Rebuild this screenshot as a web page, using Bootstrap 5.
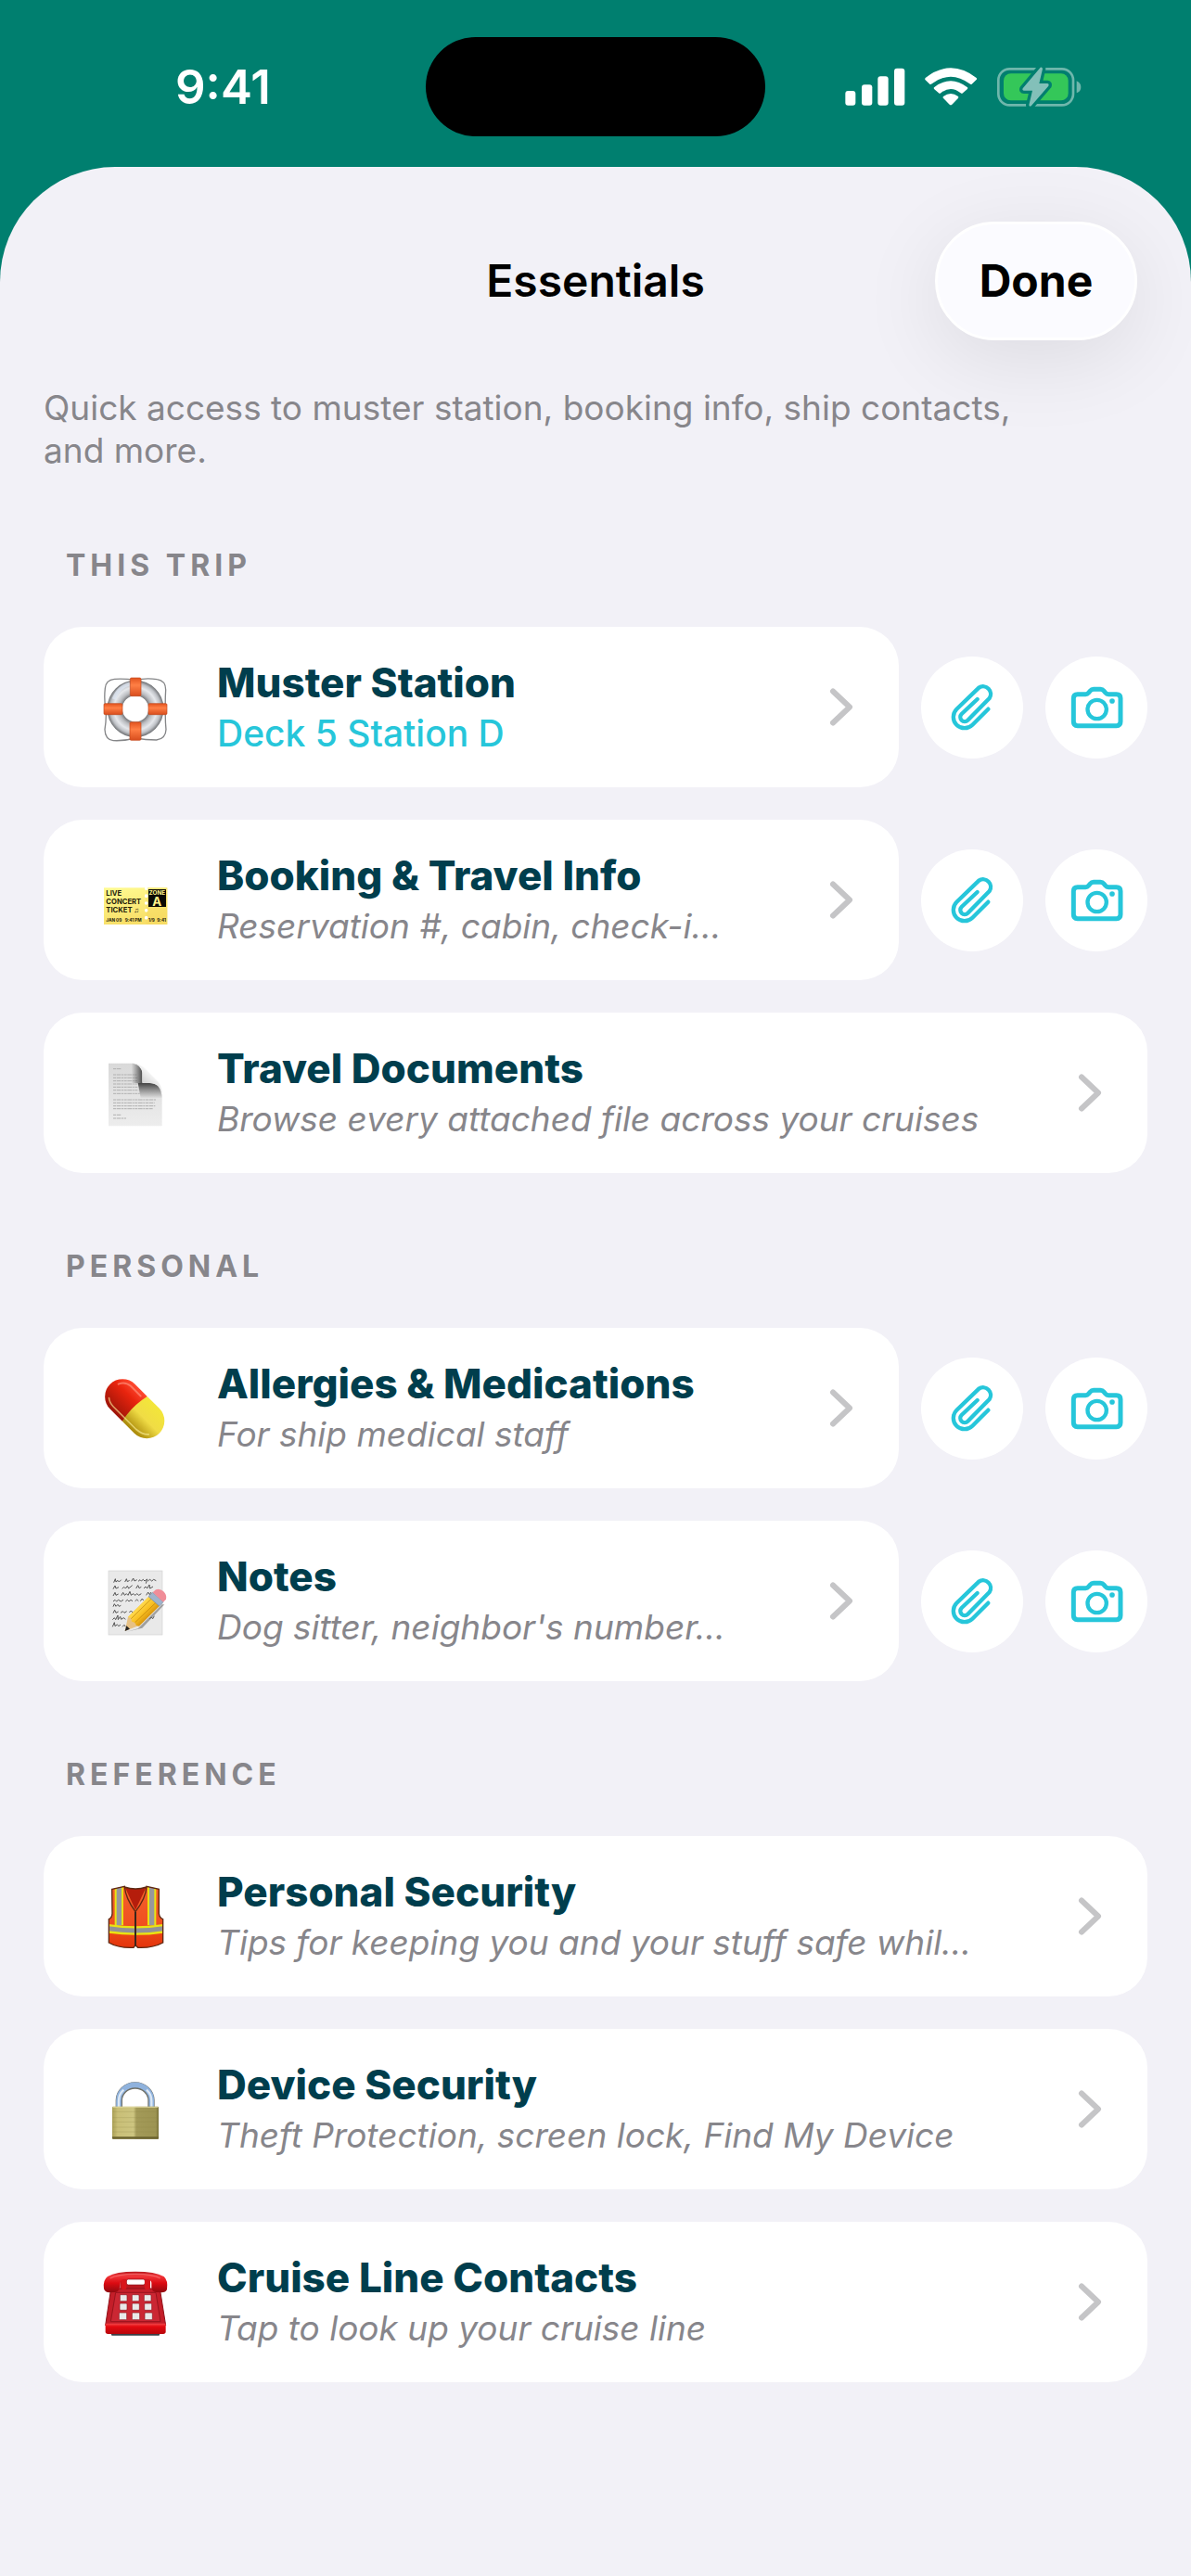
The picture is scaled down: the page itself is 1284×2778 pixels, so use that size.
<!DOCTYPE html>
<html lang="en">
<head>
<meta charset="utf-8">
<meta name="viewport" content="width=device-width, initial-scale=1">
<title>Essentials</title>
<link href="https://cdn.jsdelivr.net/npm/bootstrap@5.3.0/dist/css/bootstrap.min.css" rel="stylesheet">
<style>
  body { background: #007f6f; font-family: Inter, "Liberation Sans", sans-serif; color: #000; }
  .status-bar { height: 180px; padding: 40px 0 33px; color: #fff; }
  .status-side { flex: 1 1 0; height: 110px; }
  .clock { margin-left: 189px; font-size: 51px; line-height: 60px; font-weight: 600; }
  .status-icons { margin-right: 117px; }
  .island { width: 366px; height: 107px; border-radius: 54px; background: #000; }
  .sheet { min-height: calc(100vh - 180px); background: #f2f1f7; border-radius: 124px 124px 0 0; padding: 59px 47px 180px; overflow: hidden; }
  .sheet-head { display: grid; grid-template-columns: 1fr auto 1fr; margin-right: 11px; padding-left: 11px; }
  .sheet-title { font-size: 48px; line-height: 60px; font-weight: 600; }
  .done-btn { height: 128px; width: 218px; border-radius: 64px; background: #fbfbff; border: 3px solid #fff; font-size: 48px; line-height: 60px; font-weight: 700; padding: 0; box-shadow: 0 20px 90px rgba(0,0,0,.09); }
  .intro { font-size: 37px; line-height: 46px; color: #87868b; margin: 50px 100px 0 0; }
  .group-title { font-size: 32px; line-height: 38px; font-weight: 700; letter-spacing: 5px; color: #87868b; margin: 82px 24px 47px; }
  .rows { gap: 35px; }
  .row-line { gap: 24px; }
  .entry { min-height: 173px; border-radius: 42px; border: 0; background: #fff; padding: 0 46px 0 43px; min-width: 0; }
  .emoji { width: 110px; height: 110px; margin-right: 34px; }
  .entry-name { font-size: 44px; line-height: 56px; font-weight: 800; color: #003e4d; }
  .entry-note { font-size: 37px; line-height: 54px; font-style: italic; color: #87868b; }
  .entry-value { font-size: 39px; line-height: 54px; font-weight: 500; color: #26c6da; }
  .chev { width: 31px; height: 45px; }
  .round-btn { width: 110px; height: 110px; border: 0; background: #fff; }
  .round-btn svg { width: 67px; height: 67px; }
</style>
<script src="https://cdn.jsdelivr.net/npm/bootstrap@5.3.0/dist/js/bootstrap.bundle.min.js"></script>
</head>
<body>
<svg class="d-none" aria-hidden="true">
  <symbol id="chevron" viewBox="0 0 31 45"><path d="M6 5.500 24 22.500 6 39.500" fill="none" stroke="#c5c5c7" stroke-width="6" stroke-linecap="round" stroke-linejoin="round"/></symbol>
  <symbol id="clip" viewBox="402 208 201 201"><path d="M553 315 502 366A36 36 0 0 1 451 315L523 246A24.500 24.500 0 0 1 557 280L487 351A14 14 0 0 1 467 331L518 283" fill="none" stroke="#26c6da" stroke-width="13" stroke-linecap="round" stroke-linejoin="round"/></symbol>
  <symbol id="camera" viewBox="805 208 201 201"><path d="M843 267h26q6 0 10-5l5-6q4-5 11-5h22q7 0 11 5l5 6q4 5 10 5h26q13 0 13 13v76q0 13-13 13h-126q-13 0-13-13v-76q0-13 13-13z" fill="none" stroke="#26c6da" stroke-width="15"/><circle cx="906" cy="316" r="30.500" fill="none" stroke="#26c6da" stroke-width="13"/><circle cx="955" cy="289" r="8.500" fill="#26c6da"/></symbol>
</svg>

<header class="status-bar d-flex align-items-center justify-content-between">
  <div class="status-side d-flex align-items-center"><span class="clock">9:41</span></div>
  <div class="island flex-shrink-0"></div>
  <div class="status-side d-flex align-items-center justify-content-end">
    <svg class="status-icons" width="256" height="44" viewBox="92 65 768 132" aria-label="Signal, Wi-Fi, battery charging">
      <g fill="#fff">
        <rect x="93" y="143" width="33" height="47" rx="9"/><rect x="146" y="123" width="34" height="67" rx="9"/><rect x="198" y="96" width="34" height="94" rx="9"/><rect x="251" y="70" width="34" height="120" rx="9"/>
        <path d="M352 101Q434 37 517 101Q520 105 516 108L502 121Q499 123 495 120Q434 74 373 120Q369 123 366 121L352 108Q349 105 352 101Z"/>
        <path d="M381 131Q434 90 487 131Q491 134 487 138L473 150Q470 153 466 150Q434 124 402 150Q398 153 395 150L381 138Q377 134 381 131Z"/>
        <path d="M410 161Q434 143 458 161Q461 164 457 168L438 187Q434 191 430 187L411 168Q407 164 410 161Z"/>
      </g>
      <rect x="588" y="72" width="242" height="117" rx="36" fill="none" stroke="#6fb7ac" stroke-width="8"/>
      <rect x="605" y="87" width="209" height="87" rx="23" fill="#34c759"/>
      <path d="M841 111Q855 117 855 131T841 150Z" fill="#6fb7ac"/>
      <path d="M724 67 667 135Q664 142 671 142H698L687 189Q688 196 694 192L750 127Q753 120 746 119H720L731 72Q730 65 724 67Z" fill="#83c0b9" stroke="#007f6f" stroke-width="20" paint-order="stroke" stroke-linejoin="round"/>
    </svg>
  </div>
</header>

<main class="sheet">
  <div class="sheet-head align-items-center">
    <span></span>
    <h1 class="sheet-title m-0">Essentials</h1>
    <div class="text-end"><button type="button" class="done-btn">Done</button></div>
  </div>
  <p class="intro">Quick access to muster station, booking info, ship contacts, and more.</p>

  <section>
    <h2 class="group-title">THIS TRIP</h2>
    <div class="rows d-flex flex-column">
      <div class="row-line d-flex align-items-center">
        <a href="#muster" class="entry card flex-row align-items-center flex-grow-1 text-decoration-none">
          <svg class="emoji flex-shrink-0" viewBox="0 -8 330 330" aria-hidden="true">
            <defs>
              <radialGradient id="ring" cx="168" cy="161" r="92" gradientUnits="userSpaceOnUse"><stop offset=".46" stop-color="#77787b"/><stop offset=".58" stop-color="#b9bbbf"/><stop offset=".75" stop-color="#e6e8ec"/><stop offset=".88" stop-color="#bfc2c7"/><stop offset="1" stop-color="#6b6d70"/></radialGradient>
              <linearGradient id="band" x2="0" y2="1"><stop stop-color="#e2541f"/><stop offset=".4" stop-color="#ff7f45"/><stop offset="1" stop-color="#d84d1d"/></linearGradient>
            </defs>
            <path d="M100 65Q133 63 168 68 205 60 238 66 266 70 266 100 264 130 265 162 264 200 267 228 266 258 236 262 200 262 168 256 130 266 96 264 70 260 69 228 75 190 72 162 66 130 70 95 72 68 100 65Z" fill="none" stroke="#858688" stroke-width="4"/>
            <circle cx="168" cy="161" r="67" fill="none" stroke="url(#ring)" stroke-width="49"/>
            <path d="M98 130Q114 88 150 80" fill="none" stroke="#dfe8f5" stroke-width="12" opacity=".7"/>
            <g fill="url(#band)" stroke="#c24a1e" stroke-width="2"><rect x="151" y="61" width="35" height="59" rx="4"/><rect x="150" y="204" width="36" height="59" rx="4"/><rect x="66" y="144" width="60" height="36" rx="4"/><rect x="210" y="144" width="60" height="36" rx="4"/></g>
          </svg>
          <div class="flex-grow-1 text-nowrap"><div class="entry-name">Muster Station</div><div class="entry-value">Deck 5 Station D</div></div>
          <svg class="chev flex-shrink-0" aria-hidden="true"><use href="#chevron"/></svg>
        </a>
        <button type="button" class="round-btn rounded-circle p-0 flex-shrink-0" aria-label="Attach file"><svg><use href="#clip"/></svg></button>
        <button type="button" class="round-btn rounded-circle p-0 flex-shrink-0" aria-label="Take photo"><svg><use href="#camera"/></svg></button>
      </div>
      <div class="row-line d-flex align-items-center">
        <a href="#booking" class="entry card flex-row align-items-center flex-grow-1 text-decoration-none">
          <svg class="emoji flex-shrink-0" viewBox="0 -13 330 330" aria-hidden="true" font-family="Inter, sans-serif" font-weight="700">
            <defs><linearGradient id="tick" x2=".3" y2="1"><stop stop-color="#fffb91"/><stop offset="1" stop-color="#f8df68"/></linearGradient></defs>
            <rect x="66" y="111" width="205" height="119" fill="url(#tick)"/>
            <rect x="203" y="111" width="68" height="119" fill="#f6d95f" opacity=".5"/>
            <path d="M203 114V230" stroke="#fff" stroke-width="11" stroke-dasharray="0 23.500" stroke-linecap="round"/>
            <rect x="210" y="116" width="57" height="57" fill="#0b0a05"/>
            <g fill="#25210c"><text x="73" y="138" font-size="23">LIVE</text><text x="73" y="165" font-size="23">CONCERT</text><text x="73" y="192" font-size="23">TICKET ♫</text><text x="73" y="220" font-size="14">JAN 09</text><text x="134" y="220" font-size="14">9:41 PM</text><text x="210" y="220" font-size="14">1/9</text><text x="238" y="220" font-size="14">9:41</text></g>
            <g fill="#fff38a" text-anchor="middle"><text x="238" y="135" font-size="19">ZONE</text><text x="238" y="169" font-size="40">A</text></g>
          </svg>
          <div class="flex-grow-1 text-nowrap"><div class="entry-name">Booking &amp; Travel Info</div><div class="entry-note">Reservation #, cabin, check-i…</div></div>
          <svg class="chev flex-shrink-0" aria-hidden="true"><use href="#chevron"/></svg>
        </a>
        <button type="button" class="round-btn rounded-circle p-0 flex-shrink-0" aria-label="Attach file"><svg><use href="#clip"/></svg></button>
        <button type="button" class="round-btn rounded-circle p-0 flex-shrink-0" aria-label="Take photo"><svg><use href="#camera"/></svg></button>
      </div>
      <a href="#documents" class="entry card flex-row align-items-center text-decoration-none">
        <svg class="emoji flex-shrink-0" viewBox="0 10 330 330" aria-hidden="true">
          <defs>
            <linearGradient id="page" x2="0" y2="1"><stop stop-color="#d9d9d9"/><stop offset="1" stop-color="#ededed"/></linearGradient>
            <linearGradient id="shadeH" x1="155" x2="192" gradientUnits="userSpaceOnUse"><stop stop-color="#555" stop-opacity="0"/><stop offset="1" stop-color="#444"/></linearGradient>
            <linearGradient id="shadeV" x1="0" x2="0" y1="140" y2="192" gradientUnits="userSpaceOnUse"><stop stop-color="#3c3c3c"/><stop offset="1" stop-color="#555" stop-opacity="0"/></linearGradient>
            <linearGradient id="curl" x1="190" y1="142" x2="220" y2="108" gradientUnits="userSpaceOnUse"><stop stop-color="#cfcfcf"/><stop offset="1" stop-color="#fafafa"/></linearGradient>
          </defs>
          <path d="M81 78H160Q184 80 190 104L222 142Q250 146 254 180V281H81Z" fill="url(#page)"/>
          <path d="M96 115H172M96 125H176M96 135H174M96 145H176M96 155H176M96 165H178M96 176H182M96 196H236M96 206H230M96 216H232M96 225H224M96 245H122M96 256H138M96 96H122" stroke="#b0b0b0" stroke-width="3" stroke-dasharray="9 2 14 2 6 2"/>
          <path d="M150 78H160Q186 80 190 106V142H155Z" fill="url(#shadeH)"/>
          <path d="M176 142H222Q250 146 254 190H185Z" fill="url(#shadeV)"/>
          <path d="M160 78Q180 78 196 92L240 136Q252 148 254 174 248 144 214 142 190 142 190 138V110Q188 84 160 78Z" fill="url(#curl)"/>
        </svg>
        <div class="flex-grow-1 text-nowrap"><div class="entry-name">Travel Documents</div><div class="entry-note">Browse every attached file across your cruises</div></div>
        <svg class="chev flex-shrink-0" aria-hidden="true"><use href="#chevron"/></svg>
      </a>
    </div>
  </section>

  <section>
    <h2 class="group-title">PERSONAL</h2>
    <div class="rows d-flex flex-column">
      <div class="row-line d-flex align-items-center">
        <a href="#medical" class="entry card flex-row align-items-center flex-grow-1 text-decoration-none">
          <svg class="emoji flex-shrink-0" viewBox="0 13 330 330" aria-hidden="true">
            <defs>
              <linearGradient id="redHalf" x2="0" y2="1"><stop stop-color="#ff4a30"/><stop offset=".35" stop-color="#e8240e"/><stop offset="1" stop-color="#9d1408"/></linearGradient>
              <linearGradient id="yelHalf" x2="0" y2="1"><stop stop-color="#f3e63a"/><stop offset=".5" stop-color="#f0dc45"/><stop offset="1" stop-color="#a88708"/></linearGradient>
            </defs>
            <g transform="rotate(45 166 179)">
              <path d="M166 122H110A57 57 0 0 0 110 236H166Z" fill="url(#redHalf)"/>
              <path d="M166 122H221A57 57 0 0 1 221 236H166Q152 179 166 122Z" fill="url(#yelHalf)"/>
              <path d="M72 160Q80 138 105 136H150" fill="none" stroke="#ff8d77" stroke-width="6" stroke-linecap="round" opacity=".7"/>
              <path d="M82 213Q94 223 112 223H215Q244 220 256 206" fill="none" stroke="#fff3a0" stroke-width="5" stroke-linecap="round" opacity=".6"/>
            </g>
          </svg>
          <div class="flex-grow-1 text-nowrap"><div class="entry-name">Allergies &amp; Medications</div><div class="entry-note">For ship medical staff</div></div>
          <svg class="chev flex-shrink-0" aria-hidden="true"><use href="#chevron"/></svg>
        </a>
        <button type="button" class="round-btn rounded-circle p-0 flex-shrink-0" aria-label="Attach file"><svg><use href="#clip"/></svg></button>
        <button type="button" class="round-btn rounded-circle p-0 flex-shrink-0" aria-label="Take photo"><svg><use href="#camera"/></svg></button>
      </div>
      <div class="row-line d-flex align-items-center">
        <a href="#notes" class="entry card flex-row align-items-center flex-grow-1 text-decoration-none">
          <svg class="emoji flex-shrink-0" viewBox="0 637 330 330" aria-hidden="true">
            <defs><linearGradient id="penc" x1="180" y1="820" x2="215" y2="855" gradientUnits="userSpaceOnUse"><stop stop-color="#ffd84a"/><stop offset=".5" stop-color="#f7bd1e"/><stop offset="1" stop-color="#d08a0a"/></linearGradient></defs>
            <rect x="81" y="703" width="174" height="207" fill="#e9e9e9" stroke="#d2d2d2" stroke-width="2"/>
            <g fill="none" stroke="#555" stroke-width="3">
              <path d="M98 741l5-12 2 10 6-5 4 5 7-7M134 739l5-10 3 9 7-4M155 737l6-10 4 9 8-4M177 737l6-5 4 4 6-5 5 5 8-6-4 14M208 736l7-5 6 5 6-5 8 4"/>
              <path d="M96 762l6-11 3 9 9-4M125 761l6-6 5 5 6-8 4 8 12-10M170 760l6-10 4 9 7-4M195 760l6-6 5 6 7-12 2 12 10-6"/>
              <path d="M96 784l6-11 3 9 8-4M122 783l6-10 5 9 6-5 5 5 6-12 4 12 7-5 6 5 6-5 6 5 8-5M203 782l6-10 5 8 5-8"/>
              <path d="M96 802l6-5 5 5 6-5 8 5 8-5M136 802l6-5 5 5 6-5 6 4M167 801l6-5 5 5M184 801l6-8 4 6"/>
              <path d="M96 819l4-9 5 8 6-6 4 6 6-3M96 840l5-10 4 9 8-4M120 839l7-5 5 5 8-5M148 838l6-6 5 6 8-6"/>
              <path d="M94 861l6-6 4 6 7-14 1 14 7-10 3 9 8-5 6 5M94 884l6-14 2 12 7-5 5 5 6-5M126 884l6-6 4 6"/><path d="M214 858l6-5 4 5 5-9"/>
            </g>
            <path d="M140 900 176 890 254 812 262 812 190 888Z" fill="#555" opacity=".5"/>
            <path d="M144 852 211 786 246 816 180 880 134 898Z" fill="#e7c184"/>
            <path d="M144 852 211 786 246 816 180 882 171 880 166 870 156 867 154 857Z" fill="url(#penc)"/>
            <path d="M134 898 139 881 150 891Z" fill="#222"/>
            <path d="M154 858 219 794M167 870 234 806" stroke="#b97d07" stroke-width="2"/>
            <path d="M210 786 224 773 258 804 245 817Z" fill="#9fb4cc" stroke="#7388a0" stroke-width="2"/>
            <path d="M224 773 234 764Q246 758 259 770 271 782 267 795L258 804Z" fill="#f08d98"/>
          </svg>
          <div class="flex-grow-1 text-nowrap"><div class="entry-name">Notes</div><div class="entry-note">Dog sitter, neighbor's number…</div></div>
          <svg class="chev flex-shrink-0" aria-hidden="true"><use href="#chevron"/></svg>
        </a>
        <button type="button" class="round-btn rounded-circle p-0 flex-shrink-0" aria-label="Attach file"><svg><use href="#clip"/></svg></button>
        <button type="button" class="round-btn rounded-circle p-0 flex-shrink-0" aria-label="Take photo"><svg><use href="#camera"/></svg></button>
      </div>
    </div>
  </section>

  <section>
    <h2 class="group-title">REFERENCE</h2>
    <div class="rows d-flex flex-column">
      <a href="#personal-security" class="entry card flex-row align-items-center text-decoration-none">
        <svg class="emoji flex-shrink-0" viewBox="0 7 330 330" aria-hidden="true">
          <defs>
            <linearGradient id="vest" x2="0" y2="1"><stop stop-color="#f4622c"/><stop offset=".6" stop-color="#f05020"/><stop offset="1" stop-color="#e23108"/></linearGradient>
            <clipPath id="vestShape"><path d="M92 83 133 74 168 150 204 74 244 83V162Q246 176 257 180V256Q225 274 176 272L168 264 162 272Q112 274 82 256V180Q92 176 93 162Z"/></clipPath>
          </defs>
          <path d="M133 76Q168 88 204 76L200 110 168 156 136 110Z" fill="#b51d0c"/>
          <g clip-path="url(#vestShape)">
            <rect x="75" y="65" width="190" height="215" fill="url(#vest)"/>
            <path d="M115 70V200M221 70V200" stroke="#eae312" stroke-width="28"/><path d="M115 70V200M221 70V200" stroke="#98989c" stroke-width="16"/>
            <path d="M78 210Q168 224 260 210" fill="none" stroke="#eae312" stroke-width="29"/><path d="M78 210Q168 224 260 210" fill="none" stroke="#929297" stroke-width="15"/>
          </g>
          <path d="M92 83 133 74Q136 112 168 156 202 112 204 74L244 83V162Q246 176 257 180V256Q225 274 176 272L168 264 162 272Q112 274 82 256V180Q92 176 93 162ZM133 76Q168 88 204 76" fill="none" stroke="#5e2812" stroke-width="4"/>
          <path d="M168 156V266" stroke="#38251b" stroke-width="6"/>
        </svg>
        <div class="flex-grow-1 text-nowrap"><div class="entry-name">Personal Security</div><div class="entry-note">Tips for keeping you and your stuff safe whil…</div></div>
        <svg class="chev flex-shrink-0" aria-hidden="true"><use href="#chevron"/></svg>
      </a>
      <a href="#device-security" class="entry card flex-row align-items-center text-decoration-none">
        <svg class="emoji flex-shrink-0" viewBox="0 631 330 330" aria-hidden="true">
          <defs><linearGradient id="brass"><stop stop-color="#aaa055"/><stop offset=".12" stop-color="#c9bf77"/><stop offset=".46" stop-color="#cdc580"/><stop offset=".52" stop-color="#a39a58"/><stop offset=".94" stop-color="#9d9452"/><stop offset="1" stop-color="#777038"/></linearGradient></defs>
          <path d="M115 790V766A52 48 0 0 1 219 766V790" fill="none" stroke="#6f6f66" stroke-width="22"/>
          <path d="M114 790V766A53 50 0 0 1 220 766V790" fill="none" stroke="#8fb2dd" stroke-width="17"/>
          <path d="M114 790V768A53 50 0 0 1 130 732M204 732A53 50 0 0 1 220 768V790" fill="none" stroke="#dce8f5" stroke-width="7"/>
          <rect x="93" y="786" width="150" height="105" rx="3" fill="url(#brass)"/>
          <path d="M95 803H242M95 822H242M95 836H242M95 853H242M95 868H242" stroke="#8c8345" stroke-width="2" opacity=".35"/>
          <path d="M93 884H243V888Q243 891 240 891H96Q93 891 93 888Z" fill="#6c6430"/>
          <path d="M95 788H241" stroke="#ded79c" stroke-width="3"/>
        </svg>
        <div class="flex-grow-1 text-nowrap"><div class="entry-name">Device Security</div><div class="entry-note">Theft Protection, screen lock, Find My Device</div></div>
        <svg class="chev flex-shrink-0" aria-hidden="true"><use href="#chevron"/></svg>
      </a>
      <a href="#contacts" class="entry card flex-row align-items-center text-decoration-none">
        <svg class="emoji flex-shrink-0" viewBox="0 25 330 330" aria-hidden="true">
          <defs>
            <linearGradient id="handset" x2="0" y2="1"><stop stop-color="#b3161c"/><stop offset=".2" stop-color="#f0383c"/><stop offset=".55" stop-color="#dc0b12"/><stop offset="1" stop-color="#8e0a10"/></linearGradient>
            <linearGradient id="foot" x2="0" y2="1"><stop stop-color="#f5494b"/><stop offset=".3" stop-color="#e30a10"/><stop offset="1" stop-color="#b8060c"/></linearGradient>
          </defs>
          <rect x="90" y="284" width="156" height="13" rx="3" fill="#3b3f47"/>
          <path d="M118 112H216V160H118Z" fill="#ba1820"/>
          <path d="M88 152Q94 145 104 145H234Q244 145 248 152L266 264H71Z" fill="#c41e29" stroke="#8f1018" stroke-width="3"/>
          <path d="M104 158H234L249 252H88Z" fill="#cb2733" stroke="#98141d" stroke-width="3"/>
          <path d="M71 258H266V284Q266 292 258 292H79Q71 292 71 284Z" fill="url(#foot)"/>
          <path d="M66 146Q62 118 78 106 104 90 168 90T260 106Q274 118 270 148 266 158 252 158L234 157Q222 156 220 142V126Q218 116 204 116H134Q122 116 119 126L117 142Q114 156 102 157L84 158Q70 158 66 146Z" fill="url(#handset)"/>
          <path d="M86 112Q110 98 168 98T248 112" fill="none" stroke="#ff8080" stroke-width="4" opacity=".6"/>
          <rect x="139" y="115" width="60" height="18" rx="6" fill="#fff" stroke="#8f1018" stroke-width="2"/>
          <rect x="122" y="116" width="17" height="32" rx="5" fill="#d9151b"/><rect x="198" y="116" width="17" height="32" rx="5" fill="#d9151b"/>
          <g fill="#e9e9e9" stroke="#8d1520" stroke-width="2"><rect x="118" y="165" width="23" height="21" rx="3"/><rect x="157" y="165" width="23" height="21" rx="3"/><rect x="196" y="165" width="23" height="21" rx="3"/><rect x="117" y="193" width="24" height="22" rx="3"/><rect x="157" y="193" width="24" height="22" rx="3"/><rect x="197" y="193" width="24" height="22" rx="3"/><rect x="115" y="223" width="25" height="23" rx="3"/><rect x="157" y="223" width="25" height="23" rx="3"/><rect x="198" y="223" width="25" height="23" rx="3"/></g>
        </svg>
        <div class="flex-grow-1 text-nowrap"><div class="entry-name">Cruise Line Contacts</div><div class="entry-note">Tap to look up your cruise line</div></div>
        <svg class="chev flex-shrink-0" aria-hidden="true"><use href="#chevron"/></svg>
      </a>
    </div>
  </section>
</main>
</body>
</html>
